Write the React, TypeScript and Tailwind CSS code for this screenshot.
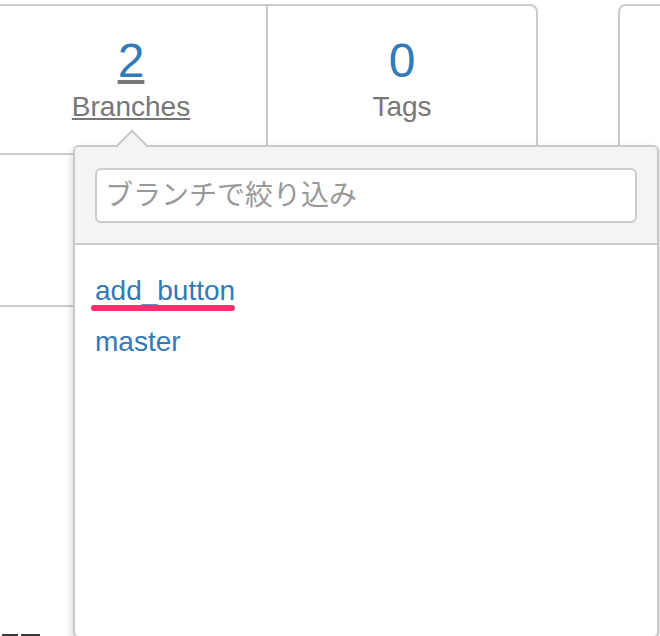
import React from "react";

export default function App() {
  return (
    <div
      className="relative w-[660px] h-[636px] overflow-hidden bg-white flex flex-col"
      style={{ fontFamily: '"Liberation Sans", "Noto Sans CJK JP", Arial, sans-serif' }}
    >
      {/* background page */}
      <div className="flex items-start mt-[4px] ml-[-4px] gap-[80px]">
        <div className="w-[542px] border-t-2 border-r-2 border-[#cccccc] rounded-tr-[8px] grid grid-cols-[272px_1fr] content-start">
          <div className="h-[149px] border-r-2 border-b-2 border-[#cccccc] pt-[31px] flex flex-col items-center">
            <a className="block text-[48px] leading-[48px] text-[#337ab7] underline decoration-[#777777]">2</a>
            <a className="block mt-[2px] text-[28px] leading-[40px] text-[#777777] underline decoration-[#777777]">Branches</a>
          </div>
          <div className="h-[149px] border-b-2 border-[#cccccc] pt-[31px] flex flex-col items-center">
            <div className="text-[48px] leading-[48px] text-[#337ab7]">0</div>
            <div className="mt-[2px] text-[28px] leading-[40px] text-[#777777]">Tags</div>
          </div>
          <div className="h-[152px] border-r-2 border-b-2 border-[#cccccc]" />
          <div className="h-[152px] border-b-2 border-[#cccccc]" />
        </div>
        <div className="flex-1 h-[400px] border-t-2 border-l-2 border-[#cccccc] rounded-tl-[8px]" />
      </div>
      <div className="mt-auto flex gap-[3px] pl-[2px]">
        <div className="w-[16px] h-[2px] bg-[#3a3a3a]" />
        <div className="w-[19px] h-[2px] bg-[#3a3a3a]" />
      </div>

      {/* popover overlay */}
      <div className="absolute left-[73px] top-[145px] w-[586px] h-[493px] border-2 border-[#c8c8c8] rounded-[6px] bg-white shadow-[0_5px_10px_rgba(0,0,0,0.2)] flex flex-col">
        <div className="absolute left-[46px] top-[-13px] w-[22px] h-[22px] rotate-45 bg-[#f4f4f4] border-t-2 border-l-2 border-[#c8c8c8]" />
        <div className="relative bg-[#f4f4f4] rounded-t-[4px] px-[20px] pt-[21px] pb-[20px] border-b-2 border-[#cccccc]">
          <input
            className="w-full h-[55px] border-2 border-[#cccccc] rounded-[6px] bg-white px-[8px] text-[28px] text-[#555555] placeholder:text-[#999999] outline-none"
            style={{ fontFamily: '"Liberation Sans", "Noto Sans CJK JP", sans-serif' }}
            placeholder="ブランチで絞り込み"
          />
        </div>
        <div className="flex flex-col px-[20px] pt-[21px]">
          <div className="relative">
            <a className="text-[28px] leading-[50px] text-[#337ab7]">add_button</a>
            <span className="absolute left-[-4px] top-[39px] w-[144px] h-[6px] rounded-full bg-[#fe2c6c]" />
          </div>
          <div className="mt-[1px]">
            <a className="text-[28px] leading-[50px] text-[#337ab7]">master</a>
          </div>
        </div>
      </div>
    </div>
  );
}
